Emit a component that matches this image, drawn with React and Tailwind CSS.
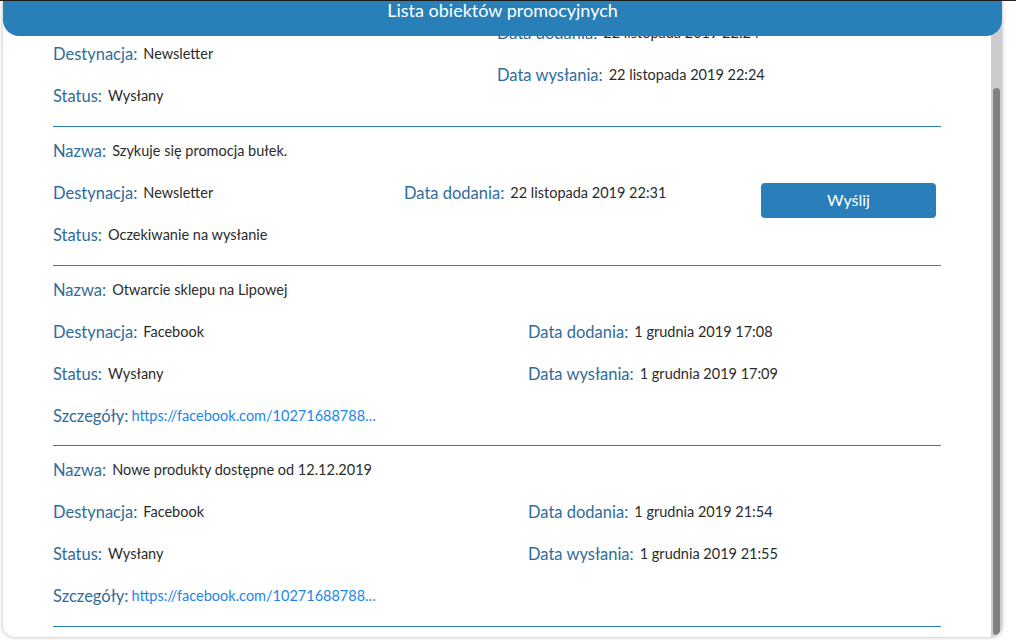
import React, { useLayoutEffect, useRef } from 'react';

const Row = ({ label, children, tight }) => (
  <div className="h-[42px] flex items-center whitespace-nowrap">
    <span className={tight ? 'text-[16.5px] text-[#2f6c9c] mr-[3px]' : 'text-[16.5px] text-[#2f6c9c] mr-[6px]'}>{label}</span>
    {children}
  </div>
);

const Val = ({ children }) => <span className="text-[14.5px] text-[#2b2b2b]">{children}</span>;

const Link = ({ href }) => (
  <a href={href} className="inline-block max-w-[253px] truncate text-[14.5px] text-[#1c86e8]">
    {href}
  </a>
);

const App = () => {
  const scrollRef = useRef(null);

  useLayoutEffect(() => {
    if (scrollRef.current) scrollRef.current.scrollTop = scrollRef.current.scrollHeight;
  }, []);

  return (
    <div className="w-[1016px] h-[640px] bg-white border-t border-[#222222] font-['Source_Sans_Pro','Lato',sans-serif]">
      <div className="ml-[3px] w-[999px] h-[636px] relative rounded-b-[12px] overflow-hidden bg-white shadow-[0_0_4px_rgba(0,0,0,0.3)]">
        <div className="absolute top-0 left-0 right-0 h-[35px] z-10 bg-[#2980b9] rounded-b-[16px] text-white text-center text-[18px] leading-[18px]">
          Lista obiektów promocyjnych
        </div>

        {/* scrollbar */}
        <div className="absolute top-0 right-0 bottom-0 w-[11px] bg-[#cccccc]">
          <div className="absolute left-[2px] top-[87px] w-[7px] h-[547px] rounded-full bg-[#808080]" />
        </div>

        <div ref={scrollRef} className="h-full overflow-y-scroll [scrollbar-width:none]">
          <div className="pl-[50px] pr-[61px] pt-[93px] pb-[10px]">
            {/* 1 */}
            <div className="flex items-center pt-[3px] pb-[9px] border-b border-[#2a7fba]">
              <div className="w-[444px]">
                <Row label="Nazwa:"><Val>Promocja pieczywa na weekend</Val></Row>
                <Row label="Destynacja:"><Val>Newsletter</Val></Row>
                <Row label="Status:"><Val>Wysłany</Val></Row>
              </div>
              <div className="flex-1">
                <Row label="Data dodania:"><Val>22 listopada 2019 22:24</Val></Row>
                <Row label="Data wysłania:"><Val>22 listopada 2019 22:24</Val></Row>
              </div>
            </div>

            {/* 2 */}
            <div className="flex items-center pt-[3px] pb-[9px] border-b border-[#2a7fba]">
              <div className="w-[351px]">
                <Row label="Nazwa:"><Val>Szykuje się promocja bułek.</Val></Row>
                <Row label="Destynacja:"><Val>Newsletter</Val></Row>
                <Row label="Status:"><Val>Oczekiwanie na wysłanie</Val></Row>
              </div>
              <div className="w-[357px]">
                <Row label="Data dodania:"><Val>22 listopada 2019 22:31</Val></Row>
              </div>
              <button className="w-[175px] h-[35px] mt-[14px] rounded-[4px] bg-[#2a7fba] text-white text-[16px]">
                Wyślij
              </button>
            </div>

            {/* 3 */}
            <div className="flex items-center pt-[3px] pb-[8px] border-b border-[#2a7fba]">
              <div className="w-[475px]">
                <Row label="Nazwa:"><Val>Otwarcie sklepu na Lipowej</Val></Row>
                <Row label="Destynacja:"><Val>Facebook</Val></Row>
                <Row label="Status:"><Val>Wysłany</Val></Row>
                <Row label="Szczegóły:" tight><Link href="https://facebook.com/102716887881234_113456789012345" /></Row>
              </div>
              <div className="flex-1">
                <Row label="Data dodania:"><Val>1 grudnia 2019 17:08</Val></Row>
                <Row label="Data wysłania:"><Val>1 grudnia 2019 17:09</Val></Row>
              </div>
            </div>

            {/* 4 */}
            <div className="flex items-center pt-[3px] pb-[9px] border-b border-[#2a7fba]">
              <div className="w-[475px]">
                <Row label="Nazwa:"><Val>Nowe produkty dostępne od 12.12.2019</Val></Row>
                <Row label="Destynacja:"><Val>Facebook</Val></Row>
                <Row label="Status:"><Val>Wysłany</Val></Row>
                <Row label="Szczegóły:" tight><Link href="https://facebook.com/102716887882345_124567890123456" /></Row>
              </div>
              <div className="flex-1">
                <Row label="Data dodania:"><Val>1 grudnia 2019 21:54</Val></Row>
                <Row label="Data wysłania:"><Val>1 grudnia 2019 21:55</Val></Row>
              </div>
            </div>
          </div>
        </div>
      </div>
    </div>
  );
};

export default App;
